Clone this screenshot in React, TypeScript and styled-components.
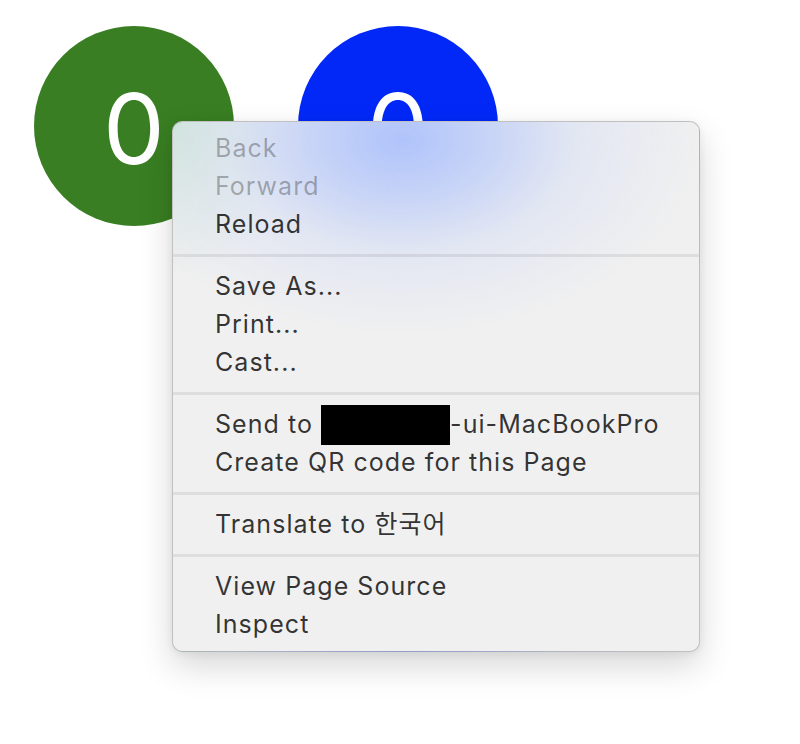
import React from "react";
import styled, { createGlobalStyle } from "styled-components";

const Global = createGlobalStyle`
  html, body { margin: 0; padding: 0; background: #ffffff; }
  body { font-family: Inter, "Noto Sans", "Noto Sans CJK KR", sans-serif; }
`;

const Page = styled.div`
  position: relative;
  width: 800px;
  height: 744px;
  box-sizing: border-box;
  padding: 26px 34px;
  display: flex;
  gap: 64px;
  align-items: flex-start;
`;

const Circle = styled.div<{ $color: string }>`
  width: 200px;
  height: 200px;
  border-radius: 50%;
  background: ${(p) => p.$color};
  display: flex;
  align-items: center;
  justify-content: center;
  color: #ffffff;
  font-family: Inter, "Liberation Sans", sans-serif;
  font-size: 98px;
  font-weight: 400;
  line-height: 1;
  padding-top: 6px;
  box-sizing: border-box;
`;

const Menu = styled.div`
  position: absolute;
  left: 172px;
  top: 121px;
  width: 528px;
  box-sizing: border-box;
  padding: 7px 0 8px;
  border-radius: 10px;
  border: 1px solid rgba(0, 0, 0, 0.2);
  background:
    radial-gradient(ellipse 300px 195px at 228px 18px, rgba(172, 193, 252, 0.95) 0%, rgba(182, 200, 250, 0.72) 28%, rgba(208, 218, 246, 0.42) 58%, rgba(240, 240, 240, 0) 100%),
    radial-gradient(ellipse 120px 160px at 0px 0px, rgba(205, 230, 210, 0.9) 0%, rgba(218, 232, 222, 0.5) 55%, rgba(240, 240, 240, 0) 100%),
    #f0f0f0;
  box-shadow: 0 14px 34px rgba(0, 0, 0, 0.16), 0 2px 8px rgba(0, 0, 0, 0.06);
  font-family: Inter, "Noto Sans CJK KR", sans-serif;
`;

const Item = styled.div<{ $disabled?: boolean }>`
  height: 38px;
  line-height: 38px;
  padding-left: 42px;
  font-size: 25px;
  letter-spacing: 1.05px;
  white-space: nowrap;
  color: ${(p) => (p.$disabled ? "rgba(0,0,0,0.3)" : "rgba(0,0,0,0.8)")};
`;

const Separator = styled.div`
  height: 3px;
  margin: 11px 0 10px;
  background: rgba(0, 0, 0, 0.075);
`;

const Redacted = styled.span`
  display: inline-block;
  width: 129px;
  height: 40px;
  background: #000000;
  vertical-align: -12px;
`;

export default function App() {
  return (
    <>
      <Global />
      <Page>
        <Circle $color="#397e22">0</Circle>
        <Circle $color="#0228f8">0</Circle>
        <Menu>
          <Item $disabled>Back</Item>
          <Item $disabled>Forward</Item>
          <Item>Reload</Item>
          <Separator />
          <Item>Save As...</Item>
          <Item>Print...</Item>
          <Item>Cast...</Item>
          <Separator />
          <Item>
            Send to <Redacted />-ui-MacBookPro
          </Item>
          <Item>Create QR code for this Page</Item>
          <Separator />
          <Item>Translate to 한국어</Item>
          <Separator />
          <Item>View Page Source</Item>
          <Item>Inspect</Item>
        </Menu>
      </Page>
    </>
  );
}
